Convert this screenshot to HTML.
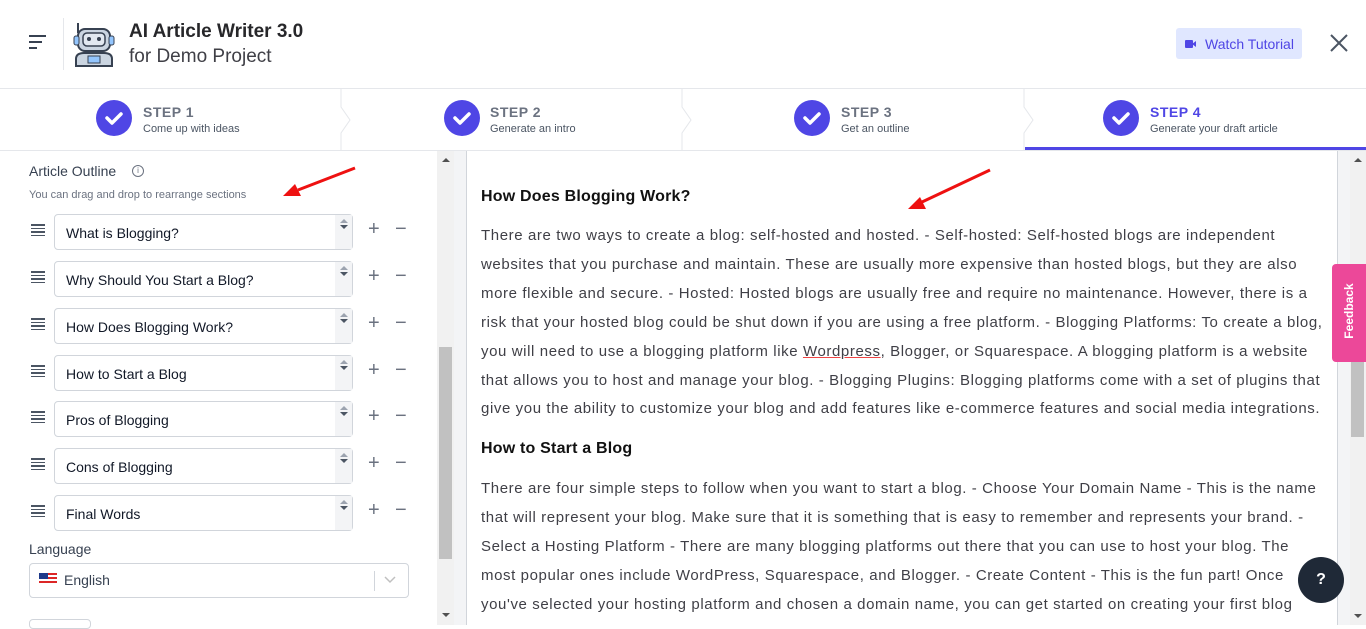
<!DOCTYPE html>
<html><head><meta charset="utf-8"><style>
*{box-sizing:border-box;margin:0;padding:0}
body{width:1366px;height:625px;overflow:hidden;background:#fff;font-family:"Liberation Sans",Arial,sans-serif;color:#1f2937;position:relative}
.abs{position:absolute}
.step .c{position:absolute;width:36px;height:36px;border-radius:50%;background:#4f46e5;top:100px}
.step .t{position:absolute;top:104px;font-size:14px;font-weight:bold;color:#6b7280;letter-spacing:.5px}
.step .s{position:absolute;top:123px;font-size:11px;color:#4b5563}
.row{position:absolute;left:0;width:437px;height:36px}
.row .h{position:absolute;left:31px;top:10px;width:14px}
.row .h i{display:block;height:1.5px;background:#4b5563;margin-bottom:2px}
.row .in{position:absolute;left:54px;top:0;width:299px;height:36px;border:1px solid #d1d5db;border-radius:4px;font-size:14px;padding:10px 11px;color:#111827}
.row .sp{position:absolute;right:0;top:0;width:17px;height:34px;background:#f3f4f6}
.row .sp:before{content:"";position:absolute;left:5px;top:4px;border-left:4px solid transparent;border-right:4px solid transparent;border-bottom:4px solid #9ca3af}
.row .sp:after{content:"";position:absolute;left:5px;top:10px;border-left:4px solid transparent;border-right:4px solid transparent;border-top:4px solid #4b5563}
.row .pm{position:absolute;top:4px;font-size:20px;color:#6b7280}
.p{position:absolute;left:481px;font-size:15px;color:#3f3f46;white-space:nowrap;letter-spacing:.6px}
.hd{position:absolute;left:481px;font-size:16px;font-weight:bold;color:#111;letter-spacing:.2px}
</style></head><body>
<div class="abs" style="left:29px;top:35px;width:17px"><div style="height:2px;background:#374151;margin-bottom:4px"></div><div style="height:2px;width:13px;background:#374151;margin-bottom:4px"></div><div style="height:2px;width:8px;background:#374151"></div></div>
<div class="abs" style="left:63px;top:18px;width:1px;height:52px;background:#e5e7eb"></div>
<svg class="abs" style="left:72px;top:21px" width="44" height="46" viewBox="0 0 44 46"><line x1="6" y1="2" x2="6" y2="12" stroke="#374151" stroke-width="2"/><rect x="6" y="8" width="32" height="22" rx="7" fill="#cbd5e1" stroke="#374151" stroke-width="2"/><rect x="11" y="12" width="22" height="13" rx="4" fill="#e2e8f0" stroke="#374151" stroke-width="1.5"/><circle cx="17" cy="18" r="2" fill="#374151"/><circle cx="27" cy="18" r="2" fill="#374151"/><rect x="2" y="15" width="5" height="9" rx="2" fill="#93c5fd" stroke="#374151"/><rect x="37" y="15" width="5" height="9" rx="2" fill="#93c5fd" stroke="#374151"/><path d="M4 45 V38 Q4 32 12 32 H32 Q40 32 40 38 V45 Z" fill="#cbd5e1" stroke="#374151" stroke-width="2"/><rect x="16" y="35" width="12" height="7" fill="#93c5fd" stroke="#374151"/></svg>
<div class="abs" style="left:129px;top:21px;font-size:19px;font-weight:bold;color:#27272a">AI Article Writer 3.0</div>
<div class="abs" style="left:129px;top:46px;font-size:19px;color:#3f3f46">for Demo Project</div>
<div class="abs" style="left:1176px;top:28px;width:126px;height:31px;background:#e0e7ff;border-radius:3px;font-size:14px;color:#4f46e5;padding:8px 0 0 29px">Watch Tutorial</div>
<div class="abs" style="left:1185px;top:40px;width:8px;height:8px;background:#4f46e5;border-radius:1px"></div>
<div class="abs" style="left:1192px;top:41px;width:0;height:0;border-top:3px solid transparent;border-bottom:3px solid transparent;border-right:4px solid #4f46e5"></div>
<svg class="abs" style="left:1330px;top:34px" width="18" height="18"><path d="M1 1L17 17M17 1L1 17" stroke="#4b5563" stroke-width="2"/></svg>
<div class="abs" style="left:0;top:88px;width:1366px;height:1px;background:#e5e7eb"></div>
<div class="abs" style="left:0;top:150px;width:1366px;height:1px;background:#e5e7eb"></div>
<svg class="abs" style="left:0;top:89px" width="1366" height="62"><g fill="none" stroke="#e5e7eb"><path d="M341 0V18L350 31L341 44V62"/><path d="M682 0V18L691 31L682 44V62"/><path d="M1024 0V18L1033 31L1024 44V62"/></g></svg>
<div class="abs" style="left:1025px;top:147px;width:341px;height:3px;background:#4f46e5"></div>
<div class="step">
<div class="c" style="left:96px"></div><div class="t" style="left:143px">STEP 1</div><div class="s" style="left:143px">Come up with ideas</div>
<div class="c" style="left:444px"></div><div class="t" style="left:490px">STEP 2</div><div class="s" style="left:490px">Generate an intro</div>
<div class="c" style="left:794px"></div><div class="t" style="left:841px">STEP 3</div><div class="s" style="left:841px">Get an outline</div>
<div class="c" style="left:1103px"></div><div class="t" style="left:1150px;color:#4f46e5">STEP 4</div><div class="s" style="left:1150px">Generate your draft article</div>
</div>
<svg class="abs" style="left:0;top:100px" width="1366" height="36"><g fill="none" stroke="#fff" stroke-width="3.5" stroke-linecap="round" stroke-linejoin="round"><path d="M107 18l5 5 9-9"/><path d="M455 18l5 5 9-9"/><path d="M805 18l5 5 9-9"/><path d="M1114 18l5 5 9-9"/></g></svg>
<div class="abs" style="left:29px;top:163px;font-size:14px;color:#374151">Article Outline</div>
<div class="abs" style="left:132px;top:165px;width:12px;height:12px;border:1px solid #6b7280;border-radius:50%;font-size:8px;text-align:center;line-height:10px;color:#6b7280">i</div>
<div class="abs" style="left:29px;top:189px;font-size:11px;color:#6b7280">You can drag and drop to rearrange sections</div>
<div class="row" style="top:214px"><div class="h"><i></i><i></i><i></i><i></i></div><div class="in">What is Blogging?<div class="sp"></div></div><div class="pm" style="left:368px">+</div><div class="pm" style="left:395px">−</div></div>
<div class="row" style="top:261px"><div class="h"><i></i><i></i><i></i><i></i></div><div class="in">Why Should You Start a Blog?<div class="sp"></div></div><div class="pm" style="left:368px">+</div><div class="pm" style="left:395px">−</div></div>
<div class="row" style="top:308px"><div class="h"><i></i><i></i><i></i><i></i></div><div class="in">How Does Blogging Work?<div class="sp"></div></div><div class="pm" style="left:368px">+</div><div class="pm" style="left:395px">−</div></div>
<div class="row" style="top:355px"><div class="h"><i></i><i></i><i></i><i></i></div><div class="in">How to Start a Blog<div class="sp"></div></div><div class="pm" style="left:368px">+</div><div class="pm" style="left:395px">−</div></div>
<div class="row" style="top:401px"><div class="h"><i></i><i></i><i></i><i></i></div><div class="in">Pros of Blogging<div class="sp"></div></div><div class="pm" style="left:368px">+</div><div class="pm" style="left:395px">−</div></div>
<div class="row" style="top:448px"><div class="h"><i></i><i></i><i></i><i></i></div><div class="in">Cons of Blogging<div class="sp"></div></div><div class="pm" style="left:368px">+</div><div class="pm" style="left:395px">−</div></div>
<div class="row" style="top:495px"><div class="h"><i></i><i></i><i></i><i></i></div><div class="in">Final Words<div class="sp"></div></div><div class="pm" style="left:368px">+</div><div class="pm" style="left:395px">−</div></div>
<div class="abs" style="left:29px;top:541px;font-size:14px;color:#374151">Language</div>
<div class="abs" style="left:29px;top:563px;width:380px;height:35px;border:1px solid #d1d5db;border-radius:4px"></div>
<div class="abs" style="left:39px;top:573px;width:18px;height:12px;background:repeating-linear-gradient(#dc2626 0 2px,#fff 2px 4px)"><div style="width:9px;height:6px;background:#1e3a8a"></div></div>
<div class="abs" style="left:64px;top:572px;font-size:14px;color:#374151">English</div>
<div class="abs" style="left:374px;top:571px;width:1px;height:20px;background:#d1d5db"></div>
<svg class="abs" style="left:384px;top:576px" width="12" height="8"><path d="M1 1l5 5 5-5" fill="none" stroke="#c0c0c0" stroke-width="1.5"/></svg>
<div class="abs" style="left:29px;top:619px;width:62px;height:10px;border:1px solid #d1d5db;border-radius:4px"></div>
<div class="abs" style="left:437px;top:151px;width:17px;height:474px;background:#f1f1f1"></div>
<div class="abs" style="left:439px;top:347px;width:13px;height:212px;background:#c1c1c1"></div>
<div class="abs" style="left:442px;top:158px;border-left:4px solid transparent;border-right:4px solid transparent;border-bottom:4px solid #505050"></div>
<div class="abs" style="left:442px;top:613px;border-left:4px solid transparent;border-right:4px solid transparent;border-top:4px solid #505050"></div>
<div class="abs" style="left:454px;top:151px;width:12px;height:474px;background:#f3f4f6"></div>
<div class="abs" style="left:466px;top:151px;width:1px;height:474px;background:#d1d5db"></div>
<div class="hd" style="top:188px">How Does Blogging Work?</div>
<div class="p" style="top:227px">There are two ways to create a blog: self-hosted and hosted. - Self-hosted: Self-hosted blogs are independent</div>
<div class="p" style="top:256px">websites that you purchase and maintain. These are usually more expensive than hosted blogs, but they are also</div>
<div class="p" style="top:285px">more flexible and secure. - Hosted: Hosted blogs are usually free and require no maintenance. However, there is a</div>
<div class="p" style="top:314px">risk that your hosted blog could be shut down if you are using a free platform. - Blogging Platforms: To create a blog,</div>
<div class="p" style="top:343px">you will need to use a blogging platform like <span style="text-decoration:underline;text-decoration-color:#ef4444">Wordpress</span>, Blogger, or Squarespace. A blogging platform is a website</div>
<div class="p" style="top:372px">that allows you to host and manage your blog. - Blogging Plugins: Blogging platforms come with a set of plugins that</div>
<div class="p" style="top:400px">give you the ability to customize your blog and add features like e-commerce features and social media integrations.</div>
<div class="hd" style="top:440px">How to Start a Blog</div>
<div class="p" style="top:480px">There are four simple steps to follow when you want to start a blog. - Choose Your Domain Name - This is the name</div>
<div class="p" style="top:509px">that will represent your blog. Make sure that it is something that is easy to remember and represents your brand. -</div>
<div class="p" style="top:538px">Select a Hosting Platform - There are many blogging platforms out there that you can use to host your blog. The</div>
<div class="p" style="top:567px">most popular ones include WordPress, Squarespace, and Blogger. - Create Content - This is the fun part! Once</div>
<div class="p" style="top:596px">you've selected your hosting platform and chosen a domain name, you can get started on creating your first blog</div>
<div class="abs" style="left:1337px;top:151px;width:1px;height:474px;background:#d1d5db"></div>
<div class="abs" style="left:1338px;top:151px;width:12px;height:474px;background:#f3f4f6"></div>
<div class="abs" style="left:1350px;top:151px;width:16px;height:474px;background:#f1f1f1"></div>
<div class="abs" style="left:1351px;top:360px;width:13px;height:77px;background:#c1c1c1"></div>
<div class="abs" style="left:1354px;top:158px;border-left:4px solid transparent;border-right:4px solid transparent;border-bottom:4px solid #505050"></div>
<div class="abs" style="left:1354px;top:614px;border-left:4px solid transparent;border-right:4px solid transparent;border-top:4px solid #505050"></div>
<div class="abs" style="left:1332px;top:264px;width:34px;height:98px;background:#ec4899;border-radius:4px 0 0 4px"></div>
<div class="abs" style="left:1309px;top:304px;width:80px;transform:rotate(-90deg);color:#fff;font-size:12px;font-weight:bold;text-align:center">Feedback</div>
<div class="abs" style="left:1298px;top:557px;width:46px;height:46px;border-radius:50%;background:#1f2937;color:#fff;font-weight:bold;font-size:16px;text-align:center;line-height:46px">?</div>
<svg class="abs" style="left:0;top:0" width="1366" height="625"><g stroke="#e11" stroke-width="3" fill="#e11"><line x1="355" y1="168" x2="298" y2="190"/><path d="M283 196l12-12 6 12z" stroke="none"/><line x1="990" y1="170" x2="922" y2="202"/><path d="M908 209l12-12 6 12z" stroke="none"/></g></svg>
</body></html>
